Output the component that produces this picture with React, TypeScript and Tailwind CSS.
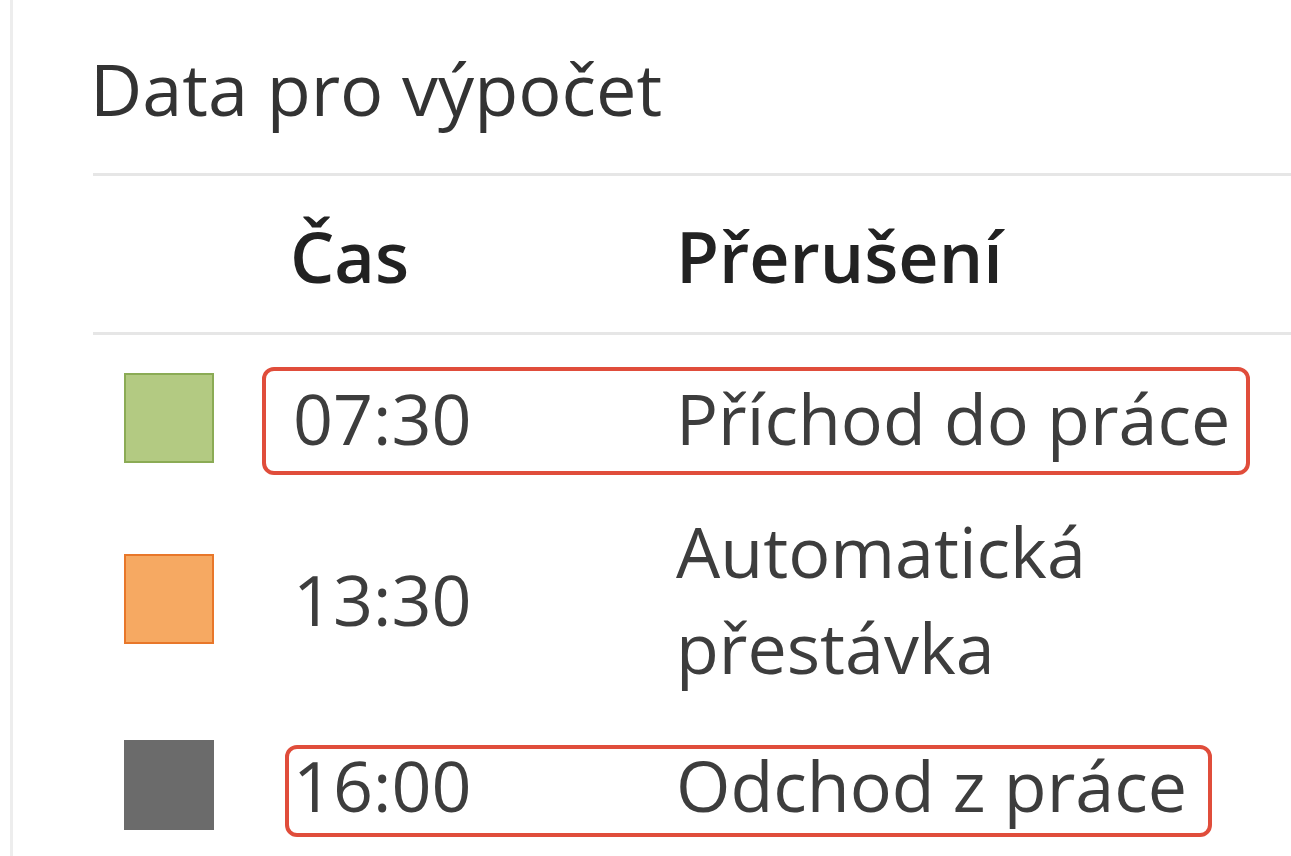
import React from 'react';

type Row = {
  time: string;
  label: string;
  swatch: string;
  gap: string;
};

const rows: Row[] = [
  { time: '07:30', label: 'Příchod do práce', swatch: 'bg-[#b3ca82] border-[#8bab55]', gap: 'pt-[35px]' },
  { time: '13:30', label: 'Automatická přestávka', swatch: 'bg-[#f6a962] border-[#e8772a]', gap: 'pt-[37px]' },
  { time: '16:00', label: 'Odchod z práce', swatch: 'bg-[#6b6b6b] border-[#6b6b6b]', gap: 'pt-[42px]' },
];

export default function App() {
  return (
    <div className="relative h-[856px] w-[1291px] overflow-hidden bg-white font-['Open_Sans',sans-serif] text-[70px] leading-[96px]">
      <div className="ml-[10px] h-full border-l-[3px] border-[#ededed] pl-[80px] pt-[40px]">
        <h2 className="ml-[-3px] text-[72px] font-normal text-[#333333]">Data pro výpočet</h2>

        <div className="mt-[37px] border-t-[3px] border-[#e6e6e6]" />

        {/* header */}
        <div className="flex border-b-[3px] border-[#e6e6e6] pb-[28px] pt-[32px] font-semibold text-[#222222]">
          <div className="w-[197px] shrink-0" />
          <div className="w-[386px] shrink-0">Čas</div>
          <div className="flex-1">Přerušení</div>
        </div>

        {/* rows */}
        {rows.map((row) => (
          <div key={row.time} className={`flex items-center text-[#3d3d3d] ${row.gap}`}>
            <div className="w-[196px] shrink-0 pl-[31px]">
              <div className={`h-[90px] w-[90px] border-2 ${row.swatch}`} />
            </div>
            <div className="w-[387px] shrink-0 pl-[4px]">{row.time}</div>
            <div className="flex-1 pr-[40px]">{row.label}</div>
          </div>
        ))}
      </div>

      {/* highlight annotations */}
      <div className="absolute left-[262px] top-[367px] h-[108px] w-[988px] rounded-[12px] border-4 border-[#e04d3b]" />
      <div className="absolute left-[285px] top-[745px] h-[92px] w-[927px] rounded-[12px] border-4 border-[#e04d3b]" />
    </div>
  );
}
